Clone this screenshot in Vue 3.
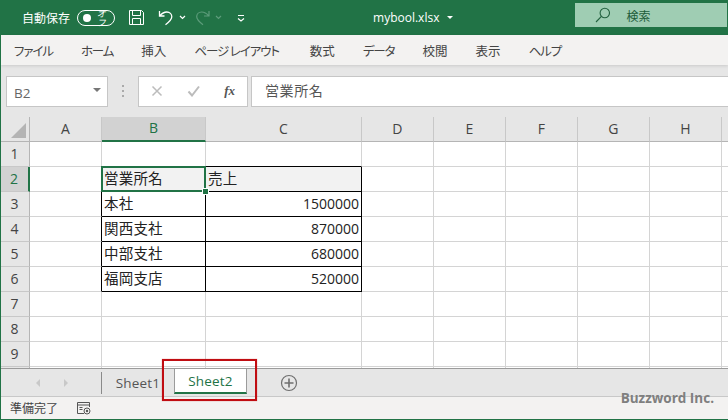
<script setup>
import { computed } from "vue";

const tabs = [
  { label: "ファイル", kana: true },
  { label: "ホーム", kana: true },
  { label: "挿入" },
  { label: "ページ レイアウト", kana: true, wide: true },
  { label: "数式" },
  { label: "データ", kana: true },
  { label: "校閲" },
  { label: "表示" },
  { label: "ヘルプ", kana: true },
];
// last column runs off the window, so its letter is never visible
const columns = [
  { name: "A", width: 72 },
  { name: "B", width: 104 },
  { name: "C", width: 156 },
  { name: "D", width: 72 },
  { name: "E", width: 72 },
  { name: "F", width: 72 },
  { name: "G", width: 72 },
  { name: "H", width: 72 },
  { name: "", width: 72 },
];
const data = {
  B2: "営業所名",
  C2: "売上",
  B3: "本社",
  C3: "1500000",
  B4: "関西支社",
  C4: "870000",
  B5: "中部支社",
  C5: "680000",
  B6: "福岡支店",
  C6: "520000",
};
const rows = [1, 2, 3, 4, 5, 6, 7, 8, 9, 10];

const gridColumns = computed(() => "29px " + columns.map((c) => c.width + "px").join(" "));

const cellClass = (col, row) => {
  const inTable = (col === "B" || col === "C") && row >= 2 && row <= 6;
  return {
    "edge-right": (col === "A" && row >= 2 && row <= 6) || inTable,
    "edge-bottom": ((col === "B" || col === "C") && row === 1) || inTable,
    shaded: inTable && row === 2,
    number: col === "C" && row > 2,
  };
};
</script>

<template>
  <div class="window">
    <header class="titlebar">
      <span class="autosave">自動保存</span>
      <span class="toggle"><i class="knob"></i><em>オフ</em></span>
      <svg class="qat save" width="17" height="17" viewBox="0 0 17 17" fill="none" stroke="#fff" stroke-width="1">
        <path d="M1.5 1.5h12l2 2v12h-14z" />
        <path d="M4.5 1.5v5h8v-5M4.5 15.5v-6h8v6" />
      </svg>
      <svg class="qat undo" width="17" height="17" viewBox="0 0 17 17" fill="none" stroke="#fff" stroke-width="1.3">
        <path d="M1.5 2v5h5M1.8 6.8C4 4.2 6.2 3 8.8 3c3 0 5 2.2 5 4.8 0 3-2.4 5-6.3 8" />
      </svg>
      <svg class="qat chev" width="7" height="5" viewBox="0 0 7 5" fill="none" stroke="#fff" stroke-width="1.2">
        <path d="M1 1l2.5 2.5L6 1" />
      </svg>
      <svg class="qat redo" width="17" height="17" viewBox="0 0 17 17" fill="none" stroke="#5d9c7b" stroke-width="1.2">
        <path d="M15 2v5h-5M14.7 6.8C12.5 4.2 10.3 3 7.7 3c-3 0-5 2.2-5 4.8 0 3 2.4 5 6.3 8" />
      </svg>
      <svg class="qat chev dim" width="7" height="5" viewBox="0 0 7 5" fill="none" stroke="#5d9c7b" stroke-width="1.2">
        <path d="M1 1l2.5 2.5L6 1" />
      </svg>
      <svg class="qat more" width="8" height="8" viewBox="0 0 8 8" fill="none" stroke="#fff" stroke-width="1.2">
        <path d="M1 1.5h6M1 4.5l3 2.5 3-2.5" />
      </svg>
      <span class="filename">mybool.xlsx</span>
      <i class="file-caret"></i>
      <div class="search">
        <svg width="16" height="16" viewBox="0 0 16 16" fill="none" stroke="#22613f" stroke-width="1.1">
          <circle cx="9.8" cy="6" r="4.7" />
          <path d="M6.4 9.4L1 15" />
        </svg>
        <span>検索</span>
      </div>
    </header>

    <nav class="ribbon">
      <span
        v-for="tab in tabs"
        :key="tab.label"
        class="ribbon-tab"
        :class="{ kana: tab.kana, wide: tab.wide }"
      >{{ tab.label }}</span>
    </nav>

    <section class="formula-area">
      <div class="name-box">
        <span>B2</span>
        <i class="name-caret"></i>
      </div>
      <div class="grip"><i></i><i></i><i></i></div>
      <div class="fx-box">
        <svg width="12" height="12" viewBox="0 0 12 12" stroke="#bcbcbc" stroke-width="1.5" fill="none">
          <path d="M1.5 1.5l9 9M10.5 1.5l-9 9" />
        </svg>
        <svg width="14" height="12" viewBox="0 0 14 12" stroke="#bcbcbc" stroke-width="2" fill="none">
          <path d="M1.5 6.5l3.5 4 7-9" />
        </svg>
        <span class="fx">fx</span>
      </div>
      <div class="formula-input">営業所名</div>
    </section>

    <div class="sheet" :style="{ gridTemplateColumns: gridColumns }">
      <div class="corner"><i></i></div>
      <div
        v-for="col in columns"
        :key="col.name"
        class="col-head"
        :class="{ active: col.name === 'B' }"
      >
        {{ col.name }}
      </div>
      <template v-for="row in rows" :key="row">
        <div class="row-head" :class="{ active: row === 2 }">{{ row === 10 ? "" : row }}</div>
        <div
          v-for="col in columns"
          :key="col.name + row"
          class="cell"
          :class="cellClass(col.name, row)"
        >
          {{ data[col.name + row] }}
          <div v-if="col.name === 'B' && row === 2" class="selection"><i></i></div>
        </div>
      </template>
    </div>

    <div class="tabbar">
      <div class="tab-nav">
        <i class="arrow left"></i>
        <i class="arrow right"></i>
      </div>
      <div class="sheet-tab">Sheet1</div>
      <div class="sheet-tab current">Sheet2</div>
      <svg class="add" width="18" height="18" viewBox="0 0 18 18" fill="none" stroke="#6f6f6f">
        <circle cx="9" cy="9" r="7.5" stroke-width="1.2" />
        <path d="M9 4.5v9M4.5 9h9" stroke-width="1.6" />
      </svg>
    </div>

    <footer class="statusbar">
      <span>準備完了</span>
      <svg width="15" height="14" viewBox="0 0 15 14" fill="none" stroke="#555" stroke-width="1">
        <path d="M8 12.5H1.5v-11h12V6M1.5 4h12M3.5 6.5h3M3.5 8.5h3" />
        <circle cx="11" cy="10" r="3" />
        <circle cx="11" cy="10" r="1.2" fill="#555" stroke="none" />
      </svg>
    </footer>

    <div class="callout"></div>
    <div class="watermark">Buzzword Inc.</div>
  </div>
</template>

<style>
html,
body {
  margin: 0;
  background: #fff;
}
</style>

<style scoped>
.window {
  position: relative;
  width: 728px;
  height: 420px;
  overflow: hidden;
  display: flex;
  flex-direction: column;
  box-sizing: border-box;
  border-left: 1px solid #217346;
  border-bottom: 1px solid #217346;
  font-family: "Noto Sans CJK JP", "Liberation Sans", sans-serif;
  color: #262626;
}

.titlebar {
  height: 35px;
  flex: none;
  background: #217346;
  margin-left: -1px;
  display: flex;
  align-items: center;
  color: #fff;
  font-size: 12px;
}
.autosave {
  margin-left: 22px;
}
.toggle {
  display: flex;
  align-items: center;
  width: 36px;
  height: 14px;
  margin-left: 7px;
  border: 1px solid #fff;
  border-radius: 8px;
}
.knob {
  width: 8px;
  height: 8px;
  margin-left: 5px;
  border-radius: 50%;
  background: #fff;
}
.toggle em {
  font-size: 9px;
  font-style: italic;
  margin-left: 6px;
  line-height: 1;
}
.qat {
  flex: none;
}
.save {
  margin-left: 13px;
}
.undo {
  margin-left: 13px;
}
.chev {
  margin-left: 4px;
}
.redo {
  margin-left: 8px;
}
.more {
  margin-left: 15px;
}
.filename {
  margin-left: 128px;
  font-family: "Open Sans", "Liberation Sans", sans-serif;
  font-size: 12px;
}
.file-caret {
  margin-left: 8px;
  border: 3px solid transparent;
  border-top-color: #fff;
  border-bottom: 0;
}
.search {
  margin-left: 122px;
  margin-top: -5px;
  width: 152px;
  height: 24px;
  flex: none;
  display: flex;
  align-items: center;
  background: #9fcdb3;
  color: #1d5c3a;
  padding-left: 20px;
  box-sizing: border-box;
}
.search span {
  margin-left: 15px;
}

.ribbon {
  height: 30px;
  flex: none;
  background: #f3f2f1;
  display: flex;
  align-items: center;
  padding-left: 13px;
  font-size: 12.5px;
  font-feature-settings: "palt";
  color: #444;
  box-shadow: 0 1px 3px rgba(0, 0, 0, 0.12);
  position: relative;
}
.ribbon-tab {
  margin-right: 28px;
  white-space: nowrap;
}
.ribbon-tab.kana {
  letter-spacing: -1.1px;
}
.ribbon-tab.wide {
  margin-right: 31px;
}

.formula-area {
  height: 52px;
  flex: none;
  background: #e6e6e6;
  display: flex;
  align-items: center;
  box-sizing: border-box;
}
.name-box {
  width: 102px;
  height: 31px;
  margin-left: 5px;
  box-sizing: border-box;
  background: #fff;
  border: 1px solid #c6c6c6;
  display: flex;
  align-items: center;
  justify-content: space-between;
  padding: 3px 6px 0 7px;
  font-family: "Open Sans", "Liberation Sans", sans-serif;
  font-size: 13.5px;
  color: #666;
}
.name-caret {
  border: 4px solid transparent;
  border-top-color: #777;
  border-bottom: 0;
  margin-bottom: 5px;
}
.grip {
  width: 30px;
  display: flex;
  flex-direction: column;
  align-items: center;
  gap: 3px;
}
.grip i {
  width: 2px;
  height: 2px;
  background: #aaa;
}
.fx-box {
  width: 110px;
  height: 31px;
  box-sizing: border-box;
  background: #fff;
  border: 1px solid #c6c6c6;
  display: flex;
  align-items: center;
  justify-content: space-between;
  padding: 0 12px;
}
.fx {
  font-family: "Liberation Serif", serif;
  font-style: italic;
  font-weight: bold;
  font-size: 13px;
  color: #555;
}
.formula-input {
  flex: 1;
  height: 31px;
  margin-left: 3px;
  box-sizing: border-box;
  background: #fff;
  border: 1px solid #c6c6c6;
  border-right: 0;
  display: flex;
  align-items: center;
  padding: 0 0 2px 13px;
  font-size: 14px;
  color: #555;
  letter-spacing: 0.6px;
}

.sheet {
  flex: 1;
  min-height: 0;
  overflow: hidden;
  display: grid;
  grid-template-rows: 25px;
  grid-auto-rows: 25px;
  align-content: start;
  background: #fff;
  border-bottom: 1px solid #9b9b9b;
  font-size: 14.5px;
  letter-spacing: 0.2px;
}
.corner {
  background: #e6e6e6;
  border-right: 1px solid #b5b5b5;
  border-bottom: 1px solid #b5b5b5;
  position: relative;
}
.corner i {
  position: absolute;
  right: 3px;
  bottom: 3px;
  border-style: solid;
  border-width: 0 0 15px 15px;
  border-color: transparent transparent #b4b4b4 transparent;
}
.col-head {
  background: #e6e6e6;
  border-right: 1px solid #c8c8c8;
  border-bottom: 1px solid #b5b5b5;
  display: flex;
  align-items: center;
  justify-content: center;
  font-family: "Open Sans", "Liberation Sans", sans-serif;
  font-size: 14px;
  color: #444;
  box-sizing: border-box;
  padding-bottom: 2px;
}
.col-head.active {
  background: #d2d2d2;
  color: #217346;
  border-bottom: 2px solid #217346;
}
.row-head {
  background: #e6e6e6;
  border-right: 1px solid #b5b5b5;
  border-bottom: 1px solid #c8c8c8;
  display: flex;
  align-items: center;
  justify-content: center;
  font-family: "Open Sans", "Liberation Sans", sans-serif;
  font-size: 14px;
  color: #444;
  box-sizing: border-box;
  padding: 0 1px 1px 0;
}
.row-head.active {
  background: #d2d2d2;
  color: #217346;
  border-right: 2px solid #217346;
}
.cell {
  position: relative;
  box-sizing: border-box;
  border-right: 1px solid #d4d4d4;
  border-bottom: 1px solid #d4d4d4;
  display: flex;
  align-items: center;
  padding: 0 2px 3px 2px;
  color: #222;
  white-space: nowrap;
}
.edge-right {
  border-right-color: #000;
}
.edge-bottom {
  border-bottom-color: #000;
}
.shaded {
  background: #f2f2f2;
}
.number {
  justify-content: flex-end;
  font-family: "Open Sans", "Liberation Sans", sans-serif;
  font-size: 14px;
  letter-spacing: 0;
  padding-bottom: 2px;
}
.selection {
  position: absolute;
  z-index: 2;
  left: -1px;
  top: -1px;
  right: -1px;
  bottom: -1px;
  border: 2px solid #217346;
}
.selection i {
  position: absolute;
  right: -5px;
  bottom: -5px;
  width: 5px;
  height: 5px;
  background: #217346;
  border: 1px solid #fff;
}

.tabbar {
  height: 28px;
  flex: none;
  background: #e6e6e6;
  display: flex;
  align-items: stretch;
  border-bottom: 1px solid #c8c8c8;
  box-sizing: border-box;
  font-family: "Open Sans", "Liberation Sans", sans-serif;
  font-size: 13.5px;
  letter-spacing: 0.2px;
}
.tab-nav {
  width: 100px;
  flex: none;
  display: flex;
  align-items: center;
  justify-content: center;
  gap: 24px;
  padding-left: 2px;
  box-sizing: border-box;
}
.arrow {
  border: 4px solid transparent;
}
.arrow.left {
  border-left: 0;
  border-right-color: #c8c8c8;
}
.arrow.right {
  border-right: 0;
  border-left-color: #c8c8c8;
}
.sheet-tab {
  display: flex;
  align-items: center;
  justify-content: center;
  box-sizing: border-box;
  height: 25px;
  color: #555;
}
.sheet-tab:not(.current) {
  width: 73px;
  height: 22px;
  margin-top: 3px;
  border-left: 1px solid #8a8a8a;
}
.sheet-tab.current {
  width: 73px;
  background: #fff;
  color: #217346;
  border-left: 1px solid #9b9b9b;
  border-right: 1px solid #9b9b9b;
  border-bottom: 2px solid #217346;
}
.add {
  margin: 5px 0 0 33px;
}

.statusbar {
  height: 22px;
  flex: none;
  background: #f3f2f1;
  display: flex;
  align-items: center;
  padding: 0 0 1px 9px;
  gap: 18px;
  font-size: 12px;
  color: #444;
  box-sizing: border-box;
}

.callout {
  position: absolute;
  left: 161px;
  top: 359px;
  width: 95px;
  height: 42px;
  box-sizing: border-box;
  border: 2px solid #c00d12;
  box-shadow: 0 0 1px rgba(200, 0, 0, 0.5);
}
.watermark {
  position: absolute;
  right: 14px;
  bottom: 12px;
  font-family: "Open Sans", "Liberation Sans", sans-serif;
  font-weight: 700;
  font-size: 13.5px;
  color: #7f7f7f;
}
</style>
